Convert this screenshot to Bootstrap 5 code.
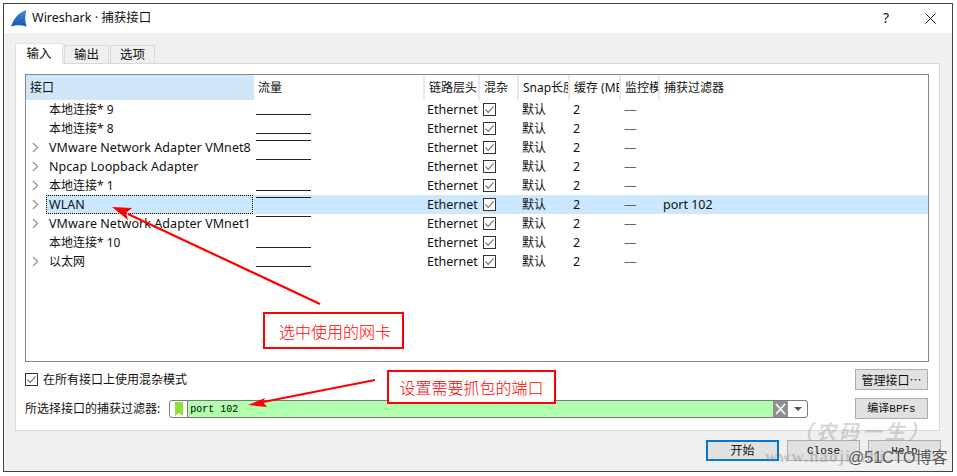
<!DOCTYPE html>
<html lang="zh-CN">
<head>
  <meta charset="UTF-8">
  <title>Wireshark · 捕获接口</title>
  <meta name="viewport" content="width=device-width, initial-scale=1">
  <link href="https://cdn.jsdelivr.net/npm/bootstrap@5.3.3/dist/css/bootstrap.min.css" rel="stylesheet">
  <style>
    html, body { overflow: hidden; }
    body {
      background: #fff;
      color: #111;
      font-family: "Noto Sans", "Noto Sans CJK SC", sans-serif;
      font-size: 12px;
      line-height: 19px;
    }
    .shot { position: relative; width: 957px; height: 476px; padding: 3px 4px 4px 3px; }
    .win { height: 469px; border: 1px solid #444; background: #f0f0f0; }
    .win-title { height: 29px; background: #fff; padding: 0 16px 0 7px; font-size: 12.5px; }
    .win-title-txt { margin-top: -2px; margin-left: 1px; }
    .win-q { font-size: 14px; margin-right: 36px; margin-top: -2px; }
    .win-main { padding: 10px 11px 0; }

    .tabs-row { border: 0; height: 20px; }
    .tabs-row .nav-link {
      height: 18px; margin: 2px 1px 0 0; width: 45px; padding: 0; text-align: center;
      font-size: 12.5px; line-height: 18px; color: #111;
      background: #f0f0f0; border: 1px solid #d9d9d9; border-bottom: 0; border-radius: 0;
    }
    .tabs-row .nav-link.active {
      height: 21px; margin-top: 0; width: 48px; background: #fff; line-height: 20px;
      position: relative; z-index: 1; color: #111;
    }
    .pane { width: 925px; height: 368px; background: #fff; border: 1px solid #d9d9d9; padding: 10px 10px 0 9px; }

    .if-list { height: 288px; border: 1px solid #828790; overflow: hidden; background: #fff; }
    .if-table { table-layout: fixed; width: 902px; margin: 0; --bs-table-bg: transparent; }
    .if-table th, .if-table td {
      padding: 0; height: 19px; line-height: 19px; font-weight: 400; color: #111;
      white-space: nowrap; overflow: hidden; border: 0; box-shadow: none; font-size: 12.5px;
    }
    .if-table th {
      height: 25px; line-height: 25px; padding-left: 4px; font-size: 12px;
      vertical-align: middle; border-right: 2px solid #e9e9e9;
    }
    .if-table th.sorted { background: #d1e6f7; border-right: 0; }
    .if-table th:last-child { border-right: 0; }
    .if-table td { padding-left: 3px; }
    .if-table td:nth-child(n+4) { padding-left: 4px; }
    .if-table td.dash { color: #666; }
    .if-table td.cn { font-size: 12px; }
    .w-if { width: 228px; } .w-tr { width: 170px; } .w-lk { width: 55px; } .w-pr { width: 39px; }
    .w-sn { width: 51px; } .w-bf { width: 51px; } .w-mo { width: 39px; }
    .if-table td.name { padding: 0; }
    .name-in { display: flex; align-items: center; height: 19px; }
    .twisty { width: 19px; flex: none; display: flex; justify-content: center; margin-right: 1px; }
    .name-txt { flex: 1; height: 19px; padding-left: 3px; margin-right: 1px; overflow: hidden; letter-spacing: .06px; }
    .name-cn { font-size: 12px; letter-spacing: 0; }
    .picked td { background: #cce8ff; }
    .picked td.name { background: transparent; }
    .picked .name-txt { background: #cce8ff; outline: 1px dotted #000; outline-offset: -1px; }
    .if-table td.tr { padding: 0 0 0 2px; overflow: visible; }
    .spark { display: block; width: 55px; height: 1px; background: #222; position: relative; }
    .spark-lo { top: 14px; }
    .spark-hi { top: 2px; }
    .chk { display: block; width: 13px; height: 13px; margin-top: 3px; }

    .ctl-row { margin-top: 8px; height: 21px; }
    .ctl-first { margin-top: 7px; }
    .chk-lbl { gap: 5px; }
    .chk-lbl .chk { margin: 0; }
    .filter {
      width: 639px; height: 18px; margin-left: 9px; border: 1px solid #7a7a7a; border-radius: 3px;
      background: #fff; overflow: hidden;
    }
    .filter-mark { width: 18px; flex: none; display: flex; justify-content: center; border-right: 1px solid #7a7a7a; padding-top: 1px; }
    .filter-in {
      flex: 1; background: #afffaf; padding-left: 2px; line-height: 17px;
      font-family: "Liberation Mono", monospace; font-size: 10px; color: #000;
    }
    .filter-drop { width: 19px; flex: none; display: flex; justify-content: center; padding-top: 6px; }
    .filter-drop i { width: 0; height: 0; border: 4px solid transparent; border-top: 4px solid #555; border-bottom: 0; }

    .qbtn {
      width: 73px; height: 21px; padding: 0; border-radius: 0; background: #e1e1e1; border: 1px solid #adadad;
      color: #111; font-size: 12px; line-height: 18px;
    }
    .qbtn:hover { background: #e1e1e1; color: #111; border-color: #adadad; }
    .ctl-row .qbtn { margin-right: 1px; }
    .qbtn-cn { font-family: "Noto Sans CJK SC", sans-serif; }
    .qbtn-mono { font-family: "Liberation Mono", "Noto Sans CJK SC", monospace; font-size: 11px; }
    .qbtn-main { border: 2px solid #0078d7; }
    .btn-bar { margin-top: 9px; padding-right: 11px; }

    .marks { position: absolute; inset: 0; pointer-events: none; }
    .note {
      position: absolute; border: 2px solid #f00; background: #fff; color: #f00;
      font-size: 16px; line-height: 1; display: flex; align-items: center; justify-content: center;
      font-family: "Noto Sans CJK SC", sans-serif; font-weight: 300; white-space: nowrap;
    }
    .note-a { left: 263px; top: 312px; width: 141px; height: 37px; padding-left: 3px; }
    .note-b { left: 387px; top: 370px; width: 169px; height: 34px; }
    .wm { position: absolute; white-space: nowrap; }
    .wm-a { left: 793px; top: 419px; font: italic 700 20px/24px "Noto Sans CJK SC", sans-serif; color: rgba(130,130,130,.32); letter-spacing: 3px; }
    .wm-b { left: 765px; top: 447px; font: 700 17px/20px "Liberation Serif", serif; color: rgba(130,130,130,.38); letter-spacing: 1px; }
    .wm-c { left: 848px; top: 448px; font: 16px/20px "Liberation Sans", "Noto Sans CJK SC", sans-serif; color: #555; text-shadow: 0 0 2px #fff; }
  </style>
</head>
<body>
  <svg width="0" height="0" class="position-absolute">
    <symbol id="box-on" viewBox="0 0 13 13">
      <rect x=".5" y=".5" width="12" height="12" fill="#fff" stroke="#333"/>
      <path d="M2.500 6.500 5.200 9.400 10.600 3.400" fill="none" stroke="#777" stroke-width="1.2"/>
    </symbol>
    <symbol id="twist" viewBox="0 0 7 11">
      <path d="M1 1 5.500 5.500 1 10" fill="none" stroke="#999" stroke-width="1.4"/>
    </symbol>
  </svg>

  <div class="shot">
    <div class="win d-flex flex-column">
      <div class="win-title d-flex align-items-center">
        <svg width="16" height="17" viewBox="0 0 16 17" class="me-1 flex-shrink-0">
          <defs><linearGradient id="fin" x1="0" y1="0" x2="0" y2="1"><stop offset="0" stop-color="#4a8ad8"/><stop offset="1" stop-color="#1256b4"/></linearGradient></defs>
          <path d="M0 16.500C2 12 5 3 15.500 0 13.800 5 13.800 11 15.500 16.500 10 14.800 5 14.800 0 16.500Z" fill="url(#fin)"/>
        </svg>
        <span class="win-title-txt flex-grow-1">Wireshark · 捕获接口</span>
        <span class="win-q">?</span>
        <svg width="11" height="11" viewBox="0 0 11 11" class="win-x"><path d="M.5.500 10.500 10.500M10.500.5.500 10.500" stroke="#222" fill="none"/></svg>
      </div>

      <div class="win-main">
        <ul class="nav nav-tabs tabs-row">
          <li class="nav-item"><a class="nav-link active" href="#">输入</a></li>
          <li class="nav-item"><a class="nav-link" href="#">输出</a></li>
          <li class="nav-item"><a class="nav-link" href="#">选项</a></li>
        </ul>
        <div class="pane">
          <div class="if-list">
            <table class="table if-table">
              <thead>
                <tr>
                  <th class="sorted w-if">接口</th><th class="w-tr">流量</th><th class="w-lk">链路层头</th><th class="w-pr">混杂</th>
                  <th class="w-sn">Snap长度</th><th class="w-bf">缓存 (MB)</th><th class="w-mo">监控模式</th><th>捕获过滤器</th>
                </tr>
              </thead>
              <tbody>
                <tr><td class="name"><div class="name-in"><span class="twisty"></span><div class="name-txt name-cn">本地连接* 9</div></div></td><td class="tr"><span class="spark spark-lo"></span></td><td>Ethernet</td><td><svg class="chk"><use href="#box-on"/></svg></td><td class="cn">默认</td><td>2</td><td class="dash">—</td><td></td></tr>
                <tr><td class="name"><div class="name-in"><span class="twisty"></span><div class="name-txt name-cn">本地连接* 8</div></div></td><td class="tr"><span class="spark spark-lo"></span></td><td>Ethernet</td><td><svg class="chk"><use href="#box-on"/></svg></td><td class="cn">默认</td><td>2</td><td class="dash">—</td><td></td></tr>
                <tr><td class="name"><div class="name-in"><span class="twisty"><svg width="7" height="11"><use href="#twist"/></svg></span><div class="name-txt">VMware Network Adapter VMnet8</div></div></td><td class="tr"><span class="spark spark-hi"></span></td><td>Ethernet</td><td><svg class="chk"><use href="#box-on"/></svg></td><td class="cn">默认</td><td>2</td><td class="dash">—</td><td></td></tr>
                <tr><td class="name"><div class="name-in"><span class="twisty"><svg width="7" height="11"><use href="#twist"/></svg></span><div class="name-txt">Npcap Loopback Adapter</div></div></td><td class="tr"><span class="spark spark-hi"></span></td><td>Ethernet</td><td><svg class="chk"><use href="#box-on"/></svg></td><td class="cn">默认</td><td>2</td><td class="dash">—</td><td></td></tr>
                <tr><td class="name"><div class="name-in"><span class="twisty"><svg width="7" height="11"><use href="#twist"/></svg></span><div class="name-txt name-cn">本地连接* 1</div></div></td><td class="tr"><span class="spark spark-lo"></span></td><td>Ethernet</td><td><svg class="chk"><use href="#box-on"/></svg></td><td class="cn">默认</td><td>2</td><td class="dash">—</td><td></td></tr>
                <tr class="picked"><td class="name"><div class="name-in"><span class="twisty"><svg width="7" height="11"><use href="#twist"/></svg></span><div class="name-txt">WLAN</div></div></td><td class="tr"><span class="spark spark-hi"></span></td><td>Ethernet</td><td><svg class="chk"><use href="#box-on"/></svg></td><td class="cn">默认</td><td>2</td><td class="dash">—</td><td>port 102</td></tr>
                <tr><td class="name"><div class="name-in"><span class="twisty"><svg width="7" height="11"><use href="#twist"/></svg></span><div class="name-txt">VMware Network Adapter VMnet1</div></div></td><td class="tr"><span class="spark spark-hi"></span></td><td>Ethernet</td><td><svg class="chk"><use href="#box-on"/></svg></td><td class="cn">默认</td><td>2</td><td class="dash">—</td><td></td></tr>
                <tr><td class="name"><div class="name-in"><span class="twisty"></span><div class="name-txt name-cn">本地连接* 10</div></div></td><td class="tr"><span class="spark spark-lo"></span></td><td>Ethernet</td><td><svg class="chk"><use href="#box-on"/></svg></td><td class="cn">默认</td><td>2</td><td class="dash">—</td><td></td></tr>
                <tr><td class="name"><div class="name-in"><span class="twisty"><svg width="7" height="11"><use href="#twist"/></svg></span><div class="name-txt name-cn">以太网</div></div></td><td class="tr"><span class="spark spark-lo"></span></td><td>Ethernet</td><td><svg class="chk"><use href="#box-on"/></svg></td><td class="cn">默认</td><td>2</td><td class="dash">—</td><td></td></tr>
              </tbody>
            </table>
          </div>

          <div class="ctl-row ctl-first d-flex justify-content-between align-items-center">
            <div class="chk-lbl d-flex align-items-center"><svg class="chk"><use href="#box-on"/></svg>在所有接口上使用混杂模式</div>
            <button class="btn qbtn qbtn-cn" type="button">管理接口…</button>
          </div>
          <div class="ctl-row d-flex align-items-center">
            <span class="flex-shrink-0">所选择接口的捕获过滤器:</span>
            <div class="filter d-flex">
              <span class="filter-mark"><svg width="10" height="14" viewBox="0 0 10 14"><path d="M1 0H9V14L5 11 1 14Z" fill="#8fe03c"/></svg></span>
              <span class="filter-in">port 102</span>
              <svg width="15" height="16" viewBox="0 0 15 16" class="flex-shrink-0"><rect width="15" height="16" fill="#8f8f8f"/><path d="M3 3 12 13M12 3 3 13" stroke="#fff" stroke-width="1.6"/></svg>
              <span class="filter-drop"><i></i></span>
            </div>
            <button class="btn qbtn qbtn-mono ms-auto" type="button">编译BPFs</button>
          </div>
        </div>
      </div>
      <div class="d-flex justify-content-end gap-2 btn-bar">
        <button class="btn qbtn qbtn-main" type="button">开始</button>
        <button class="btn qbtn qbtn-mono" type="button">Close</button>
        <button class="btn qbtn qbtn-mono" type="button">Help</button>
      </div>
    </div>

    <div class="marks">
      <span class="wm wm-a">（农码一生）</span>
      <span class="wm wm-b">www.haojiazhi</span>
      <span class="wm wm-c">@51CTO博客</span>
      <div class="note note-a">选中使用的网卡</div>
      <div class="note note-b">设置需要抓包的端口</div>
      <svg width="957" height="476" class="position-absolute top-0 start-0">
        <path d="M320 304 128 214" stroke="#f00" stroke-width="2.200" fill="none"/>
        <path d="M112 207 132 208 126 213 128 220Z" fill="#f00"/>
        <path d="M375 380 263 402" stroke="#f00" stroke-width="2.200" fill="none"/>
        <path d="M248 405 265 398 263 402 267 407Z" fill="#f00"/>
      </svg>
    </div>
  </div>
</body>
</html>
